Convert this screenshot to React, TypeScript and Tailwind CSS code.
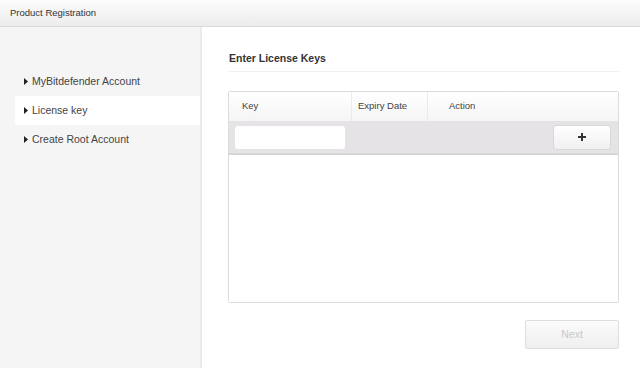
import React from "react";

const font = { fontFamily: '"Liberation Sans", Arial, sans-serif' };

function Tri() {
  return (
    <svg width="4" height="7" viewBox="0 0 4 7" className="mr-[4px] shrink-0">
      <path d="M0 0 L4 3.5 L0 7 Z" fill="#222" />
    </svg>
  );
}

export default function App() {
  const items = ["MyBitdefender Account", "License key", "Create Root Account"];
  return (
    <div className="w-[640px] h-[368px] flex flex-col overflow-hidden bg-white" style={font}>
      <div className="h-[27px] shrink-0 flex items-center pl-[10px] bg-gradient-to-b from-[#fcfcfc] to-[#ececec] border-b border-[#d9d9d9] text-[9.5px] text-[#333]">
        Product Registration
      </div>
      <div className="flex flex-1 min-h-0">
        <div className="w-[202px] shrink-0 bg-[#f5f5f5] border-r-2 border-[#ebebeb] pt-[40px] pl-[15px]">
          {items.map((t, i) => (
            <div
              key={t}
              className={`h-[29px] flex items-center pl-[9px] text-[10.5px] text-[#444] ${i === 1 ? "bg-white" : ""}`}
            >
              <Tri />
              {t}
            </div>
          ))}
        </div>
        <div className="flex-1 pl-[26px] pr-[21px] pt-[23px] flex flex-col">
          <div className="text-[10.5px] font-bold text-[#333] pl-[1px] h-[17px] flex items-center">Enter License Keys</div>
          <div className="h-px bg-[#f0f0f0] mt-[4px] ml-[1px]" />
          <div className="mt-[19px] h-[212px] border border-[#dcdcdc] rounded-[2px] flex flex-col">
            <div className="h-[29px] shrink-0 flex bg-gradient-to-b from-white to-[#f6f5f6] text-[9.5px] text-[#444]">
              <div className="w-[123px] pl-[13px] flex items-center border-r border-[#ebebeb]">Key</div>
              <div className="w-[76px] pl-[6px] flex items-center border-r border-[#ebebeb]">Expiry Date</div>
              <div className="flex-1 pl-[21px] flex items-center">Action</div>
            </div>
            <div className="h-[34px] shrink-0 flex items-center justify-between bg-[#e6e3e6] border-b-2 border-[#d6d4d6] pl-[6px] pr-[7px]">
              <div className="w-[110px] h-[23px] bg-white rounded-[3px]" />
              <div className="w-[58px] h-[25px] rounded-[3px] border border-[#d8d8d8] bg-gradient-to-b from-white to-[#f0f0f0] flex items-center justify-center">
                <svg width="8" height="8" viewBox="0 0 8 8">
                  <path d="M3 0h2v3h3v2H5v3H3V5H0V3h3z" fill="#333" />
                </svg>
              </div>
            </div>
            <div className="flex-1 bg-white" />
          </div>
          <div className="flex justify-end mt-[17px]">
            <div className="w-[94px] h-[29px] border border-[#dedede] rounded-[2px] bg-gradient-to-b from-[#fbfbfb] to-[#efefef] flex items-center justify-center text-[10.5px] text-[#c8c8c8]">
              Next
            </div>
          </div>
        </div>
      </div>
    </div>
  );
}
